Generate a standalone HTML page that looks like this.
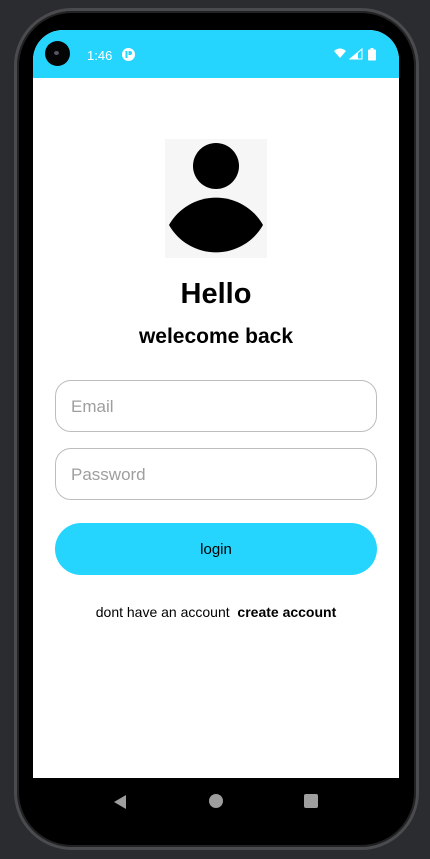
<!DOCTYPE html>
<html><head><meta charset="utf-8"><style>
*{margin:0;padding:0;box-sizing:border-box}
html,body{width:430px;height:859px;overflow:hidden;background:#2b2c30;font-family:"Liberation Sans",Roboto,sans-serif}
.phone{position:absolute;left:14px;top:8px;width:405px;height:842px;border-radius:58px;background:#000;border:3px solid #4a4b4e;box-shadow:inset 0 0 0 2px #222}
.screen{position:absolute;left:33px;top:30px;width:366px;height:748px;background:#fff;border-radius:30px 30px 0 0;overflow:hidden}
.status{position:absolute;left:0;top:0;width:366px;height:48px;background:#25d5fe}
.cam{position:absolute;left:12px;top:11px;width:25px;height:25px;border-radius:50%;background:#050505}
.cam:after{content:"";position:absolute;left:9px;top:10px;width:5px;height:4px;border-radius:50%;background:#556}
.time{position:absolute;left:54px;top:18px;color:#fff;font-size:13px}
.nav{position:absolute;left:33px;top:778px;width:366px;height:50px;background:#000}
.avatar{position:absolute;left:132px;top:109px;width:102px;height:119px;background:#f6f6f6}
h1{position:absolute;left:0;width:366px;text-align:center;top:248px;font-size:29px;font-weight:bold;color:#000}
h2{position:absolute;left:0;width:366px;text-align:center;top:295px;font-size:21px;font-weight:bold;color:#000}
.field{position:absolute;left:22px;width:322px;height:52px;border:1px solid #bdbdbd;border-radius:16px;font-size:17px;color:#9e9e9e;padding:16px 0 0 15px}
.btn{position:absolute;left:22px;top:493px;width:322px;height:52px;border-radius:26px;background:#25d5fe;text-align:center;font-size:15px;color:#000;padding-top:18px}
.foot{position:absolute;left:0;width:366px;text-align:center;top:574px;font-size:14px;color:#000}
</style></head><body>
<div class="phone"></div>
<div class="screen">
 <div class="status">
  <div class="cam"></div>
  <div class="time">1:46</div>
  <svg style="position:absolute;left:89px;top:18px" width="13" height="13" viewBox="0 0 13 13"><circle cx="6.5" cy="6.5" r="6.5" fill="#fff"/><rect x="3.5" y="3" width="2" height="7" fill="#25d5fe"/><path d="M6.5 3h1.5a2 2 0 0 1 0 4h-1.5z" fill="#25d5fe"/></svg>
  <svg style="position:absolute;left:301px;top:18px" width="44" height="13" viewBox="0 0 44 13"><path d="M0 3 Q6 -2 12 3 L6 10Z" fill="#fff"/><path d="M28 1 V11 H16Z" fill="none" stroke="#fff" stroke-width="1"/><path d="M24 5 V11 H22 L16 11 L24 4Z" fill="#fff"/><rect x="34" y="1.5" width="8" height="11" rx="1" fill="#fff"/><rect x="36.5" y="0" width="3" height="2" fill="#fff"/></svg>
 </div>
 <div class="avatar">
  <svg width="102" height="119" viewBox="0 0 102 119"><circle cx="51" cy="27" r="23" fill="#000"/><path d="M4 86 A54 54 0 0 1 98 86 A54 54 0 0 1 4 86Z" fill="#000"/></svg>
 </div>
 <h1>Hello</h1>
 <h2>welecome back</h2>
 <div class="field" style="top:350px">Email</div>
 <div class="field" style="top:418px">Password</div>
 <div class="btn">login</div>
 <div class="foot">dont have an account&nbsp;&nbsp;<b>create account</b></div>
</div>
<div class="nav">
 <svg style="position:absolute;left:80px;top:16px" width="14" height="16" viewBox="0 0 14 16"><path d="M13 1 V15 L1 8Z" fill="#9e9e9e"/></svg>
 <div style="position:absolute;left:176px;top:16px;width:14px;height:14px;border-radius:50%;background:#9e9e9e"></div>
 <div style="position:absolute;left:271px;top:16px;width:14px;height:14px;border-radius:2px;background:#9e9e9e"></div>
</div>
</body></html>
